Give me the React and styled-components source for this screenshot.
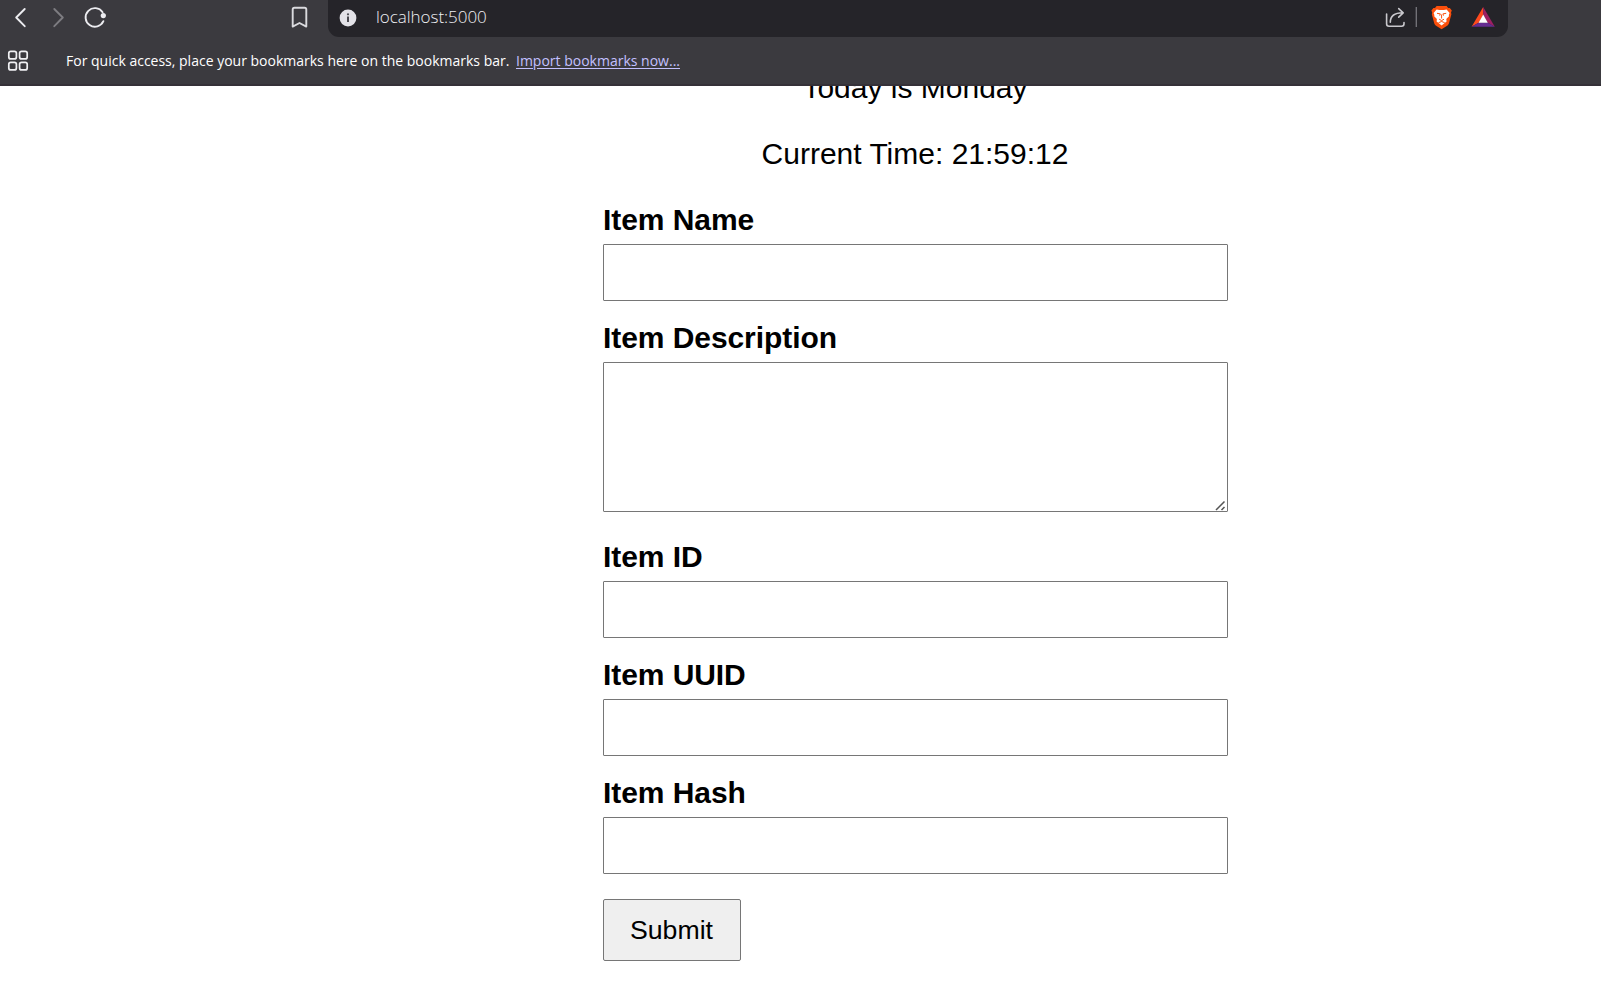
import React from "react";
import styled, { createGlobalStyle } from "styled-components";

const GlobalStyle = createGlobalStyle`
  * { box-sizing: border-box; }
  body { margin: 0; background: #fff; overflow: hidden; }
`;

const Window = styled.div`
  display: flex;
  flex-direction: column;
  width: 1601px;
  height: 984px;
  overflow: hidden;
`;

const Chrome = styled.header`
  flex: none;
  height: 86px;
  background: #3b3a3f;
  border-bottom: 2px solid #353138;
  font-family: "Open Sans", "Noto Sans", sans-serif;
  font-weight: 300;
`;

const Toolbar = styled.div`
  display: flex;
  height: 37px;
`;

const IconSlot = styled.span`
  display: block;
  flex: none;
  width: ${(p) => p.$width}px;
  height: 37px;
  svg { display: block; }
`;

const AddressBar = styled.div`
  display: flex;
  width: 1180px;
  height: 37px;
  background: #252429;
  border-radius: 0 0 11px 11px;
`;

const Address = styled.span`
  flex: 1;
  padding-left: 8px;
  line-height: 34px;
  font-size: 17px;
  letter-spacing: -0.03px;
  color: #f0f0f4;
`;

const BookmarksBar = styled.div`
  display: flex;
  height: 47px;
  line-height: 47px;
  font-size: 14px;
  font-weight: 400;
  color: #fff;
  white-space: pre;
`;

const Hint = styled.span`
  width: 450px;
`;

const ImportLink = styled.a`
  color: #c3c0ff;
  text-decoration: underline;
  text-underline-offset: 2px;
`;

const Page = styled.main`
  flex: 1;
  overflow: hidden;
  font: 30px/36px "Liberation Sans", Arial, sans-serif;
  color: #000;
`;

const Form = styled.form`
  display: flex;
  flex-direction: column;
  width: 625px;
  margin: -16px 0 0 603px;
`;

const Line = styled.p`
  margin: 0 1px 30px 0;
  text-align: center;
`;

const Label = styled.label`
  margin-bottom: 6px;
  font-weight: 700;
  letter-spacing: -0.07px;
`;

const Input = styled.input`
  height: 57px;
  margin: 0 0 19px;
  border: 1px solid #767676;
  border-radius: 1px;
  background: #fff;
  outline: none;
`;

const TextAreaFrame = styled.div`
  position: relative;
  height: 150px;
  margin-bottom: 27px;
`;

const TextArea = styled.textarea`
  display: block;
  width: 100%;
  height: 150px;
  margin: 0;
  border: 1px solid #767676;
  border-radius: 1px;
  background: #fff;
  resize: none;
  outline: none;
`;

const Grip = styled.svg`
  position: absolute;
  right: 2px;
  bottom: 1px;
`;

const Submit = styled.button`
  width: 138px;
  height: 62px;
  margin-top: 6px;
  padding: 0 1px 0 0;
  border: 1px solid #767676;
  border-radius: 2px;
  background: #efefef;
  font: 26.67px/60px "Liberation Sans", Arial, sans-serif;
  color: #000;
`;

const NavIcons = () => (
  <svg width="328" height="37" fill="none" stroke="#ececf0" strokeWidth="1.9" strokeLinecap="round" strokeLinejoin="round">
    <path d="M24.7 9 16.2 17.5l8.5 8.7" />
    <path d="M54.3 9l8.5 8.5-8.5 8.7" stroke="#7d7c81" />
    <path d="M102.6 12.2A9.3 9.3 0 1 0 103.4 21.2" />
    <circle cx="103.3" cy="15.6" r="2.6" fill="#ececf0" stroke="none" />
    <path d="M292.7 9.5q0-1.7 1.7-1.7h10.2q1.700 0 1.700 1.700V26.600L299.500 23l-6.800 3.600z" stroke="#dadade" />
  </svg>
);

const InfoIcon = () => (
  <svg width="40" height="37">
    <circle cx="20" cy="18" r="8.4" fill="#e3e2e8" />
    <circle cx="20" cy="14.3" r="1.1" fill="#4b4a51" />
    <path d="M20 16.600V22" fill="none" stroke="#4b4a51" strokeWidth="2" />
  </svg>
);

const ShareIcon = () => (
  <svg width="44" height="37" fill="none" stroke="#c9c8cd" strokeWidth="1.6" strokeLinecap="round" strokeLinejoin="round">
    <path d="M2.600 14v9.800q0 2.400 2.400 2.400h12.600q2.400 0 2.400-2.400V22.500" />
    <path d="M6.300 22.300c0-6 4.200-9.500 12.500-9.500M14.700 8.600l4.500 4.200-4.500 4.300" />
    <path d="M32.300 7v20" stroke="#77767c" strokeWidth="1.3" strokeLinecap="butt" />
  </svg>
);

const LionIcon = () => (
  <svg width="42" height="37">
    <path d="M6.600 6h10l1.600 2 1.600-.1 2 2.500-.8 2 .4 1.800-2.500 9.400q-.4 1.200-1.400 2l-5.900 3.600-5.900-3.600q-1-.8-1.400-2L1.800 14.200l.4-1.800-.8-2 2-2.500L5 8z" fill="#fb4f0b" />
    <path d="M6.600 9.400 9.400 10h4.400l2.800-.6 3 3.600-.8 1.900.2 1.300-2.700 2.900.3 2.300-5 4.200-5-4.200.3-2.300-2.700-2.900.2-1.300-.8-1.900z" fill="#fff" />
    <path d="M7 13.300l3.300.6-.6 1.700M16.200 13.300l-3.300.6.6 1.700M11.600 14.500v4M9.200 19.200l2.400 1.400 2.400-1.400M8.500 22.700l3.100-1.200 3.100 1.200" fill="none" stroke="#fb4f0b" strokeWidth="1" />
  </svg>
);

const TriangleIcon = () => (
  <svg width="35" height="37">
    <path d="M12.200 7 .6 26.800l7.400-4.300 4.200-7.500z" fill="#ff4a1e" />
    <path d="M12.200 7v8l4.200 7.500 7.400 4.300z" fill="#9e1f63" />
    <path d="M.6 26.800h23.200l-7.400-4.300H8z" fill="#662d91" />
    <path d="M12.200 14.600 7.600 22.800h9.200z" fill="#fff" />
  </svg>
);

const AppsIcon = () => (
  <svg width="66" height="47" fill="none" stroke="#f0f0f3" strokeWidth="1.7">
    {[14.3, 25.3].map((y) =>
      [8.8, 19.6].map((x) => <rect key={x + "-" + y} x={x} y={y} width="7.6" height="7.6" rx="2" />)
    )}
  </svg>
);

const Field = ({ id, label }) => (
  <>
    <Label htmlFor={id}>{label}</Label>
    <Input id={id} />
  </>
);

export default function App() {
  return (
    <Window>
      <GlobalStyle />
      <Chrome>
        <Toolbar>
          <IconSlot $width={328}><NavIcons /></IconSlot>
          <AddressBar>
            <IconSlot $width={40}><InfoIcon /></IconSlot>
            <Address>localhost:5000</Address>
            <IconSlot $width={45.5}><ShareIcon /></IconSlot>
            <IconSlot $width={41.5}><LionIcon /></IconSlot>
            <IconSlot $width={37}><TriangleIcon /></IconSlot>
          </AddressBar>
        </Toolbar>
        <BookmarksBar>
          <AppsIcon />
          <Hint>For quick access, place your bookmarks here on the bookmarks bar.</Hint>
          <ImportLink>Import bookmarks now...</ImportLink>
        </BookmarksBar>
      </Chrome>
      <Page>
        <Form>
          <Line>Today is Monday</Line>
          <Line>Current Time: 21:59:12</Line>
          <Field id="name" label="Item Name" />
          <Label htmlFor="description">Item Description</Label>
          <TextAreaFrame>
            <TextArea id="description" />
            <Grip width="11" height="11" stroke="#555" strokeWidth="1.500">
              <path d="M1 10 9.500 1.500M6.500 10 9.500 7" />
            </Grip>
          </TextAreaFrame>
          <Field id="item-id" label="Item ID" />
          <Field id="uuid" label="Item UUID" />
          <Field id="hash" label="Item Hash" />
          <Submit type="button">Submit</Submit>
        </Form>
      </Page>
    </Window>
  );
}
